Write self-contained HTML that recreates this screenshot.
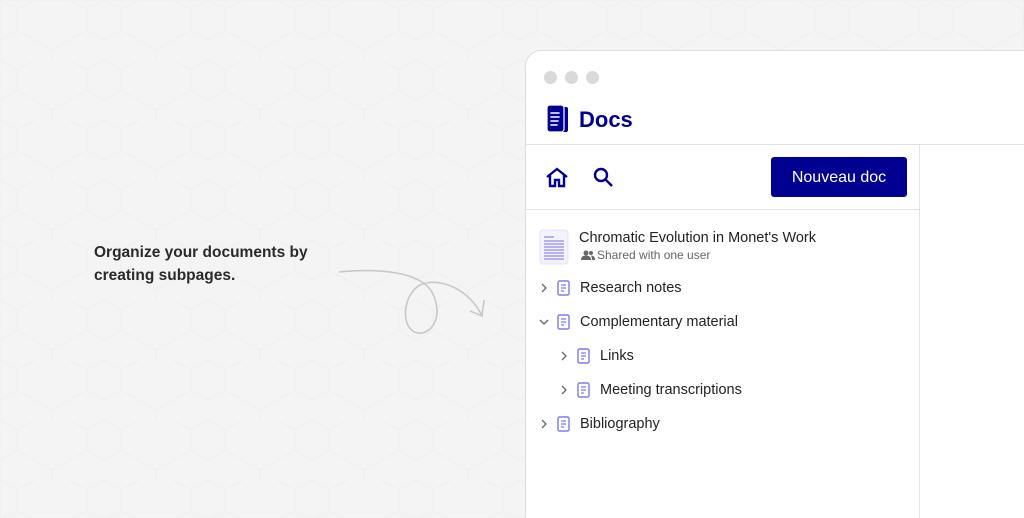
<!DOCTYPE html>
<html><head><style>
*{margin:0;padding:0;box-sizing:border-box}
html,body{width:1024px;height:518px;overflow:hidden}
body{background:#f4f4f4;font-family:"Liberation Sans",sans-serif;position:relative}
.txt{position:absolute;left:94px;top:241px;font-size:15.5px;font-weight:bold;color:#2a2a2a;line-height:23px}
.win{position:absolute;left:525px;top:50px;width:505px;height:468px;background:#fff;border:1px solid #dcdcdc;border-bottom:none;border-radius:16px 0 0 0}
.dot{position:absolute;top:20px;width:13px;height:13px;border-radius:50%;background:#d9d9d9}
.hline{position:absolute;left:0;right:0;height:1px;background:#e3e3e3}
.vline{position:absolute;left:393px;top:94px;bottom:0;width:1px;background:#e3e3e3}
.btn{position:absolute;left:245px;top:106px;width:136px;height:40px;background:#000091;color:#fff;border-radius:3px;font-size:16px;text-align:center;line-height:42px}
.row{position:absolute;font-size:14.5px;color:#222}
</style></head><body>
<svg width="1024" height="518" style="position:absolute;left:0;top:0" fill="none" stroke="#eeeeee" stroke-width="1">
<defs><pattern id="h" width="104" height="60" patternUnits="userSpaceOnUse"><path d="M0 0 L17 10 L17 30 L0 40 M17 10 L52 -10 M17 30 L52 50 L52 70 M52 50 L87 30 L87 10 L52 -10 M87 30 L104 40 M87 10 L104 0"/></pattern></defs>
<rect width="1024" height="518" fill="url(#h)"/>
<path d="M339 272 C380 268 420 272 432 292 C445 318 430 335 418 333 C400 330 402 295 420 285 C440 276 470 290 482 316" stroke="#c8c8c8" stroke-width="1.6"/>
<path d="M484 300 L482 316 L470 311" stroke="#c8c8c8" stroke-width="1.6"/>
</svg>
<div class="txt">Organize your documents by<br>creating subpages.</div>
<div class="win">
<div class="dot" style="left:18px"></div><div class="dot" style="left:39px"></div><div class="dot" style="left:60px"></div>
<svg style="position:absolute;left:19px;top:53px" width="26" height="30" viewBox="0 0 26 30"><rect x="6" y="3" width="17" height="25" rx="2" fill="#000091"/><rect x="2" y="1" width="17" height="27" rx="3" fill="#000091" stroke="#fff" stroke-width="1.2"/><path d="M6 9h8M6 13h8M6 17h7M6 21h6" stroke="#fff" stroke-width="1.6" stroke-linecap="round"/></svg>
<div style="position:absolute;left:53px;top:56px;font-size:22px;font-weight:bold;color:#000091">Docs</div>
<div class="hline" style="top:93px"></div>
<div class="vline"></div>
<svg style="position:absolute;left:19px;top:116px" width="24" height="22" viewBox="0 0 24 22" fill="none" stroke="#000091" stroke-width="2.4"><path d="M2 10 L12 2 L22 10 M5 8v11h5v-6h4v6h5V8"/></svg>
<svg style="position:absolute;left:67px;top:116px" width="22" height="22" viewBox="0 0 22 22" fill="none" stroke="#000091" stroke-width="2.4"><circle cx="8" cy="8" r="6"/><path d="M12.5 12.5 L19 19"/></svg>
<div class="btn">Nouveau doc</div>
<div class="hline" style="top:158px;width:393px"></div>
<svg style="position:absolute;left:13px;top:178px" width="30" height="36" viewBox="0 0 30 36"><rect x="1" y="1" width="28" height="34" rx="3" fill="#f3f3fb" stroke="#e4e4f4"/><path d="M5 8h10M5 12h20M5 15h20M5 18h20M5 21h20M5 24h20M5 27h20M5 30h20" stroke="#8b8bf0" stroke-width="1.3"/></svg>
<div class="row" style="left:53px;top:179px;font-size:14.5px">Chromatic Evolution in Monet's Work</div>
<svg style="position:absolute;left:55px;top:199px" width="14" height="11" viewBox="0 0 14 11" fill="#666"><circle cx="5" cy="3" r="2.5"/><path d="M0 10c0-3 2-4.5 5-4.5s5 1.5 5 4.5z"/><circle cx="10" cy="3" r="2"/><path d="M10 5.5c2.5 0 4 1.5 4 4.5h-3c0-2-0.5-3.5-1-4.5z"/></svg>
<div class="row" style="left:71px;top:197px;font-size:12px;color:#666">Shared with one user</div>
<svg width="0" height="0"><defs><g id="d"><rect x="1" y="1" width="11" height="14" rx="1.5" fill="#fff" stroke="#7c7cf0" stroke-width="1.4"/><path d="M4 5h5M4 8h5M4 11h3" stroke="#7c7cf0" stroke-width="1.2"/></g><path id="r" d="M2 1 L6 5 L2 9" fill="none" stroke="#666" stroke-width="1.3"/><path id="dn" d="M1 2 L5 6 L9 2" fill="none" stroke="#666" stroke-width="1.3"/></defs></svg>
<svg style="position:absolute;left:14px;top:232px" width="10" height="10"><use href="#r"/></svg><svg style="position:absolute;left:31px;top:229px" width="14" height="16"><use href="#d"/></svg><div class="row" style="left:54px;top:229px">Research notes</div>
<svg style="position:absolute;left:13px;top:267px" width="10" height="10"><use href="#dn"/></svg><svg style="position:absolute;left:31px;top:263px" width="14" height="16"><use href="#d"/></svg><div class="row" style="left:54px;top:263px">Complementary material</div>
<svg style="position:absolute;left:34px;top:300px" width="10" height="10"><use href="#r"/></svg><svg style="position:absolute;left:51px;top:297px" width="14" height="16"><use href="#d"/></svg><div class="row" style="left:74px;top:297px">Links</div>
<svg style="position:absolute;left:34px;top:334px" width="10" height="10"><use href="#r"/></svg><svg style="position:absolute;left:51px;top:331px" width="14" height="16"><use href="#d"/></svg><div class="row" style="left:74px;top:331px">Meeting transcriptions</div>
<svg style="position:absolute;left:14px;top:368px" width="10" height="10"><use href="#r"/></svg><svg style="position:absolute;left:31px;top:365px" width="14" height="16"><use href="#d"/></svg><div class="row" style="left:54px;top:365px">Bibliography</div>
</div>
</body></html>
